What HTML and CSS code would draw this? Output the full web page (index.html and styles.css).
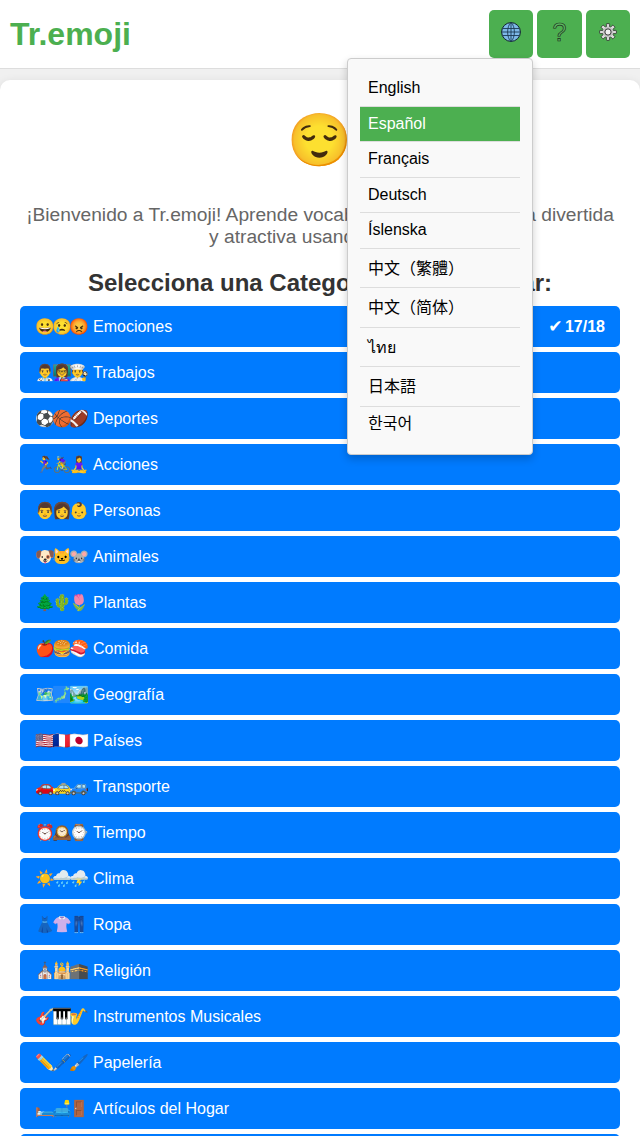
FILE: index.html
```html
<!DOCTYPE html>
<html lang="es">
<head>
    <meta charset="UTF-8">
    <meta name="viewport" content="width=device-width, initial-scale=1.0">
    <title>Tr.emoji</title>
    <link rel="stylesheet" href="styles.css">
</head>
<body>
    <header class="top-bar">
        <h1 class="logo">Tr.emoji</h1>
        <div class="top-buttons">
            <button class="icon-button">
                <svg width="20" height="20" viewBox="0 0 20 20">
                    <circle cx="10" cy="10" r="9.4" fill="#7db8e8" stroke="#10202c" stroke-width="1"/>
                    <path d="M1.500 6.500h17M.8 10h18.400M1.500 13.500h17M10 .6v18.800M10 .6C5.500 4 5.500 16 10 19.400M10 .6c4.500 3.400 4.500 15.400 0 18.800" fill="none" stroke="#1c3a55" stroke-width="0.9"/>
                </svg>
            </button>
            <button class="icon-button"><span class="help-mark">?</span></button>
            <button class="icon-button">
                <svg width="18" height="18" viewBox="0 0 20 20">
                    <g fill="#dcdcdc" stroke="#2b2b2b" stroke-width="0.9">
                        <rect id="tooth" x="8.200" y="0.700" width="3.600" height="6" rx="0.8"/>
                        <use href="#tooth" transform="rotate(45 10 10)"/>
                        <use href="#tooth" transform="rotate(90 10 10)"/>
                        <use href="#tooth" transform="rotate(135 10 10)"/>
                        <use href="#tooth" transform="rotate(180 10 10)"/>
                        <use href="#tooth" transform="rotate(225 10 10)"/>
                        <use href="#tooth" transform="rotate(270 10 10)"/>
                        <use href="#tooth" transform="rotate(315 10 10)"/>
                    </g>
                    <circle cx="10" cy="10" r="6" fill="#c4c4c4"/>
                    <circle cx="10" cy="10" r="3.500" fill="#f0f0f0" stroke="#222" stroke-width="1"/>
                </svg>
            </button>
        </div>
        <ul class="lang-menu">
            <li>English</li>
            <li class="active">Español</li>
            <li>Français</li>
            <li>Deutsch</li>
            <li>Íslenska</li>
            <li class="tall" lang="zh-TW">中文（繁體）</li>
            <li class="tall" lang="zh-CN">中文（简体）</li>
            <li class="tall" lang="th">ไทย</li>
            <li class="tall" lang="ja">日本語</li>
            <li lang="ko">한국어</li>
        </ul>
    </header>

    <main class="container">
        <div class="hero-emoji">😌</div>
        <p class="intro">¡Bienvenido a Tr.emoji! Aprende vocabulario de una manera divertida y atractiva usando emojis.</p>
        <h2>Selecciona una Categoría para Empezar:</h2>
        <div class="categories">
            <button class="category"><span class="emojis">😀😢😡</span>Emociones<span class="score"><span class="tick">✔</span> 17/18</span></button>
            <button class="category"><span class="emojis">👨‍⚕️👩‍🏫👨‍🍳</span>Trabajos</button>
            <button class="category"><span class="emojis">⚽🏀🏈</span>Deportes</button>
            <button class="category"><span class="emojis">🏃‍♀️🚴‍♀️🧘‍♀️</span>Acciones</button>
            <button class="category"><span class="emojis">👨👩👶</span>Personas</button>
            <button class="category"><span class="emojis">🐶🐱🐭</span>Animales</button>
            <button class="category"><span class="emojis">🌲🌵🌷</span>Plantas</button>
            <button class="category"><span class="emojis">🍎🍔🍣</span>Comida</button>
            <button class="category"><span class="emojis">🗺️🗾🏞️</span>Geografía</button>
            <button class="category"><span class="emojis">🇺🇸🇫🇷🇯🇵</span>Países</button>
            <button class="category"><span class="emojis">🚗🚕🚙</span>Transporte</button>
            <button class="category"><span class="emojis">⏰🕰️⌚</span>Tiempo</button>
            <button class="category"><span class="emojis">☀️🌧️⛈️</span>Clima</button>
            <button class="category"><span class="emojis">👗👚👖</span>Ropa</button>
            <button class="category"><span class="emojis">⛪🕌🕋</span>Religión</button>
            <button class="category"><span class="emojis">🎸🎹🎷</span>Instrumentos Musicales</button>
            <button class="category"><span class="emojis">✏️🖊️🖌️</span>Papelería</button>
            <button class="category"><span class="emojis">🛏️🛋️🚪</span>Artículos del Hogar</button>
            <button class="category"></button>
        </div>
    </main>
</body>
</html>
```

FILE: styles.css
```css
body {
    font-family: "Liberation Sans", "Noto Sans CJK SC", sans-serif;
    background-color: #f0f0f0;
    margin: 0;
    padding: 0;
    color: #333;
    height: 1136px;
    overflow: hidden;
}

.top-bar {
    position: relative;
    display: flex;
    justify-content: space-between;
    align-items: center;
    height: 68px;
    padding: 0 10px;
    background: #fff;
    border-bottom: 1px solid #ddd;
}

.logo {
    margin: 0;
    font-size: 32px;
    font-weight: bold;
    color: #4caf50;
}

.top-buttons {
    display: flex;
    gap: 4px;
}

.icon-button {
    display: flex;
    justify-content: center;
    align-items: center;
    width: 44.33px;
    height: 48px;
    padding: 0 0 4px;
    background-color: #4caf50;
    border: none;
    border-radius: 5px;
}

.help-mark {
    font-family: "Liberation Sans", sans-serif;
    font-size: 25px;
    line-height: 25px;
    color: #5cb860;
    -webkit-text-stroke: 0.7px #1d2b1e;
}

.lang-menu {
    position: absolute;
    top: 58px;
    right: 107.5px;
    z-index: 2;
    width: 160px;
    margin: 0;
    padding: 12px 11.5px 13px 12px;
    list-style: none;
    background: #f9f9f9;
    border: 1px solid #ccc;
    border-radius: 4px;
    box-shadow: 0 4px 8px rgba(0, 0, 0, 0.2);
    font-size: 16px;
    color: #000;
}

.lang-menu li {
    height: 34.5px;
    line-height: 34.8px;
    padding-left: 8px;
    border-bottom: 1px solid #ddd;
}

.lang-menu li:last-child {
    border-bottom: none;
}

.lang-menu .tall {
    height: 38.5px;
    line-height: 40px;
}

.lang-menu .active {
    background-color: #4caf50;
    color: #fff;
}

.container {
    margin-top: 11px;
    padding: 24px 20px 0;
    background: #fff;
    border-radius: 10px;
    box-shadow: 0 2px 10px rgba(0, 0, 0, 0.1);
    text-align: center;
}

.hero-emoji {
    font-family: "Noto Color Emoji", sans-serif;
    font-size: 52px;
    line-height: 74px;
}

.intro {
    margin: 26px 0 0;
    font-size: 19.2px;
    line-height: 22px;
    color: #666;
}

h2 {
    margin: 21px 0 9px;
    font-size: 24px;
    line-height: 28px;
    color: #333;
}

.categories {
    display: flex;
    flex-direction: column;
    gap: 5px;
}

.category {
    display: flex;
    flex: none;
    align-items: center;
    height: 41px;
    padding: 0 15px;
    background-color: #007bff;
    color: #fff;
    border: none;
    border-radius: 5px;
    font-family: inherit;
    font-size: 16px;
    text-align: left;
}

.emojis {
    width: 58px;
    font-family: "Noto Color Emoji", sans-serif;
    font-size: 16px;
    letter-spacing: -2.5px;
    white-space: nowrap;
}

.score {
    margin-left: auto;
    font-weight: bold;
}

.tick {
    margin-right: -2px;
    font-family: "DejaVu Sans", sans-serif;
    font-size: 17px;
    line-height: 16px;
}
```
